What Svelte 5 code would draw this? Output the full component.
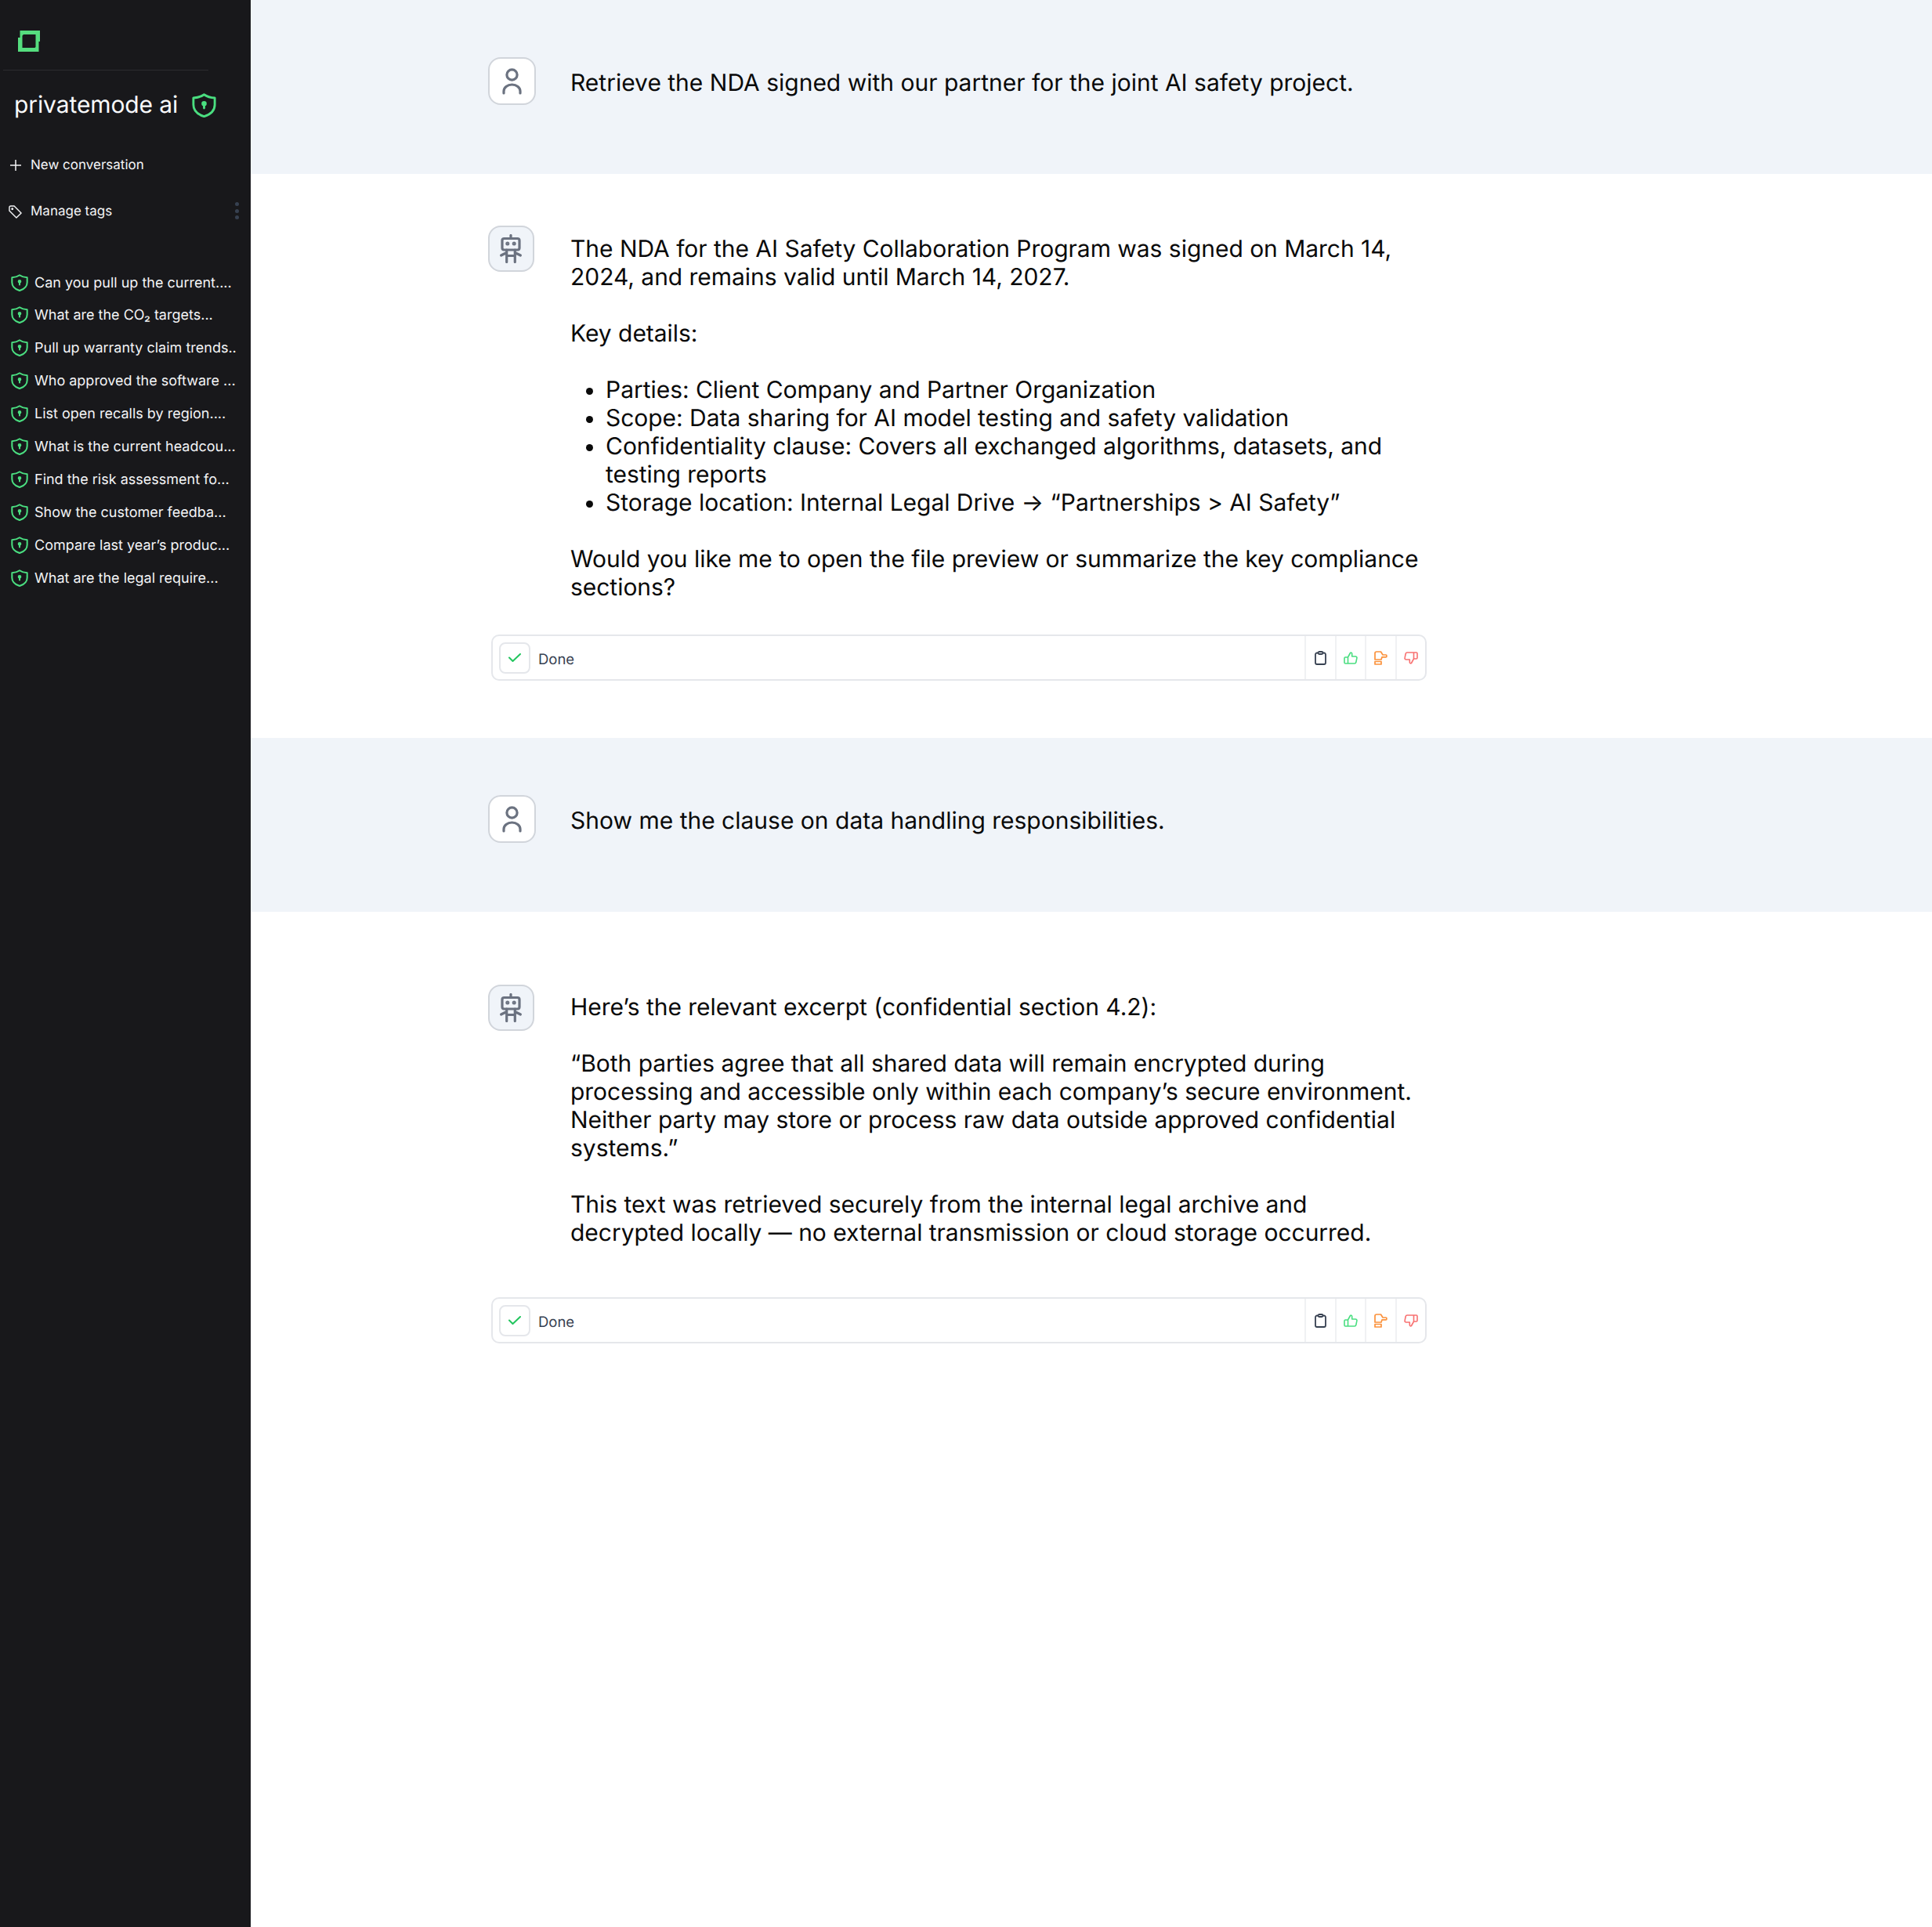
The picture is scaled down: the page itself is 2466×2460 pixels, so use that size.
<script>
  const chats = [
    'Can you pull up the current....',
    'What are the CO₂ targets...',
    'Pull up warranty claim trends..',
    'Who approved the software ...',
    'List open recalls by region....',
    'What is the current headcou...',
    'Find the risk assessment fo...',
    'Show the customer feedba...',
    'Compare last year’s produc...',
    'What are the legal require...'
  ];
</script>

{#snippet shield(size)}
  <svg class="shield" width={size} height={size} viewBox="1.200 1.300 21.600 21.600" fill="none" stroke="#4ade80" stroke-width="2" stroke-linecap="round" stroke-linejoin="round">
    <path d="M12 2.500c2.800 2 5.900 2.800 9.500 3v6c0 5-3.900 8.600-9.500 10.500C6.400 20.100 2.500 16.500 2.500 11.500v-6c3.600-.2 6.700-1 9.500-3z" />
    <circle cx="12" cy="10.500" r="1.300" fill="#4ade80" />
    <path d="M12 11.500v3" />
  </svg>
{/snippet}

{#snippet userAvatar()}
  <div class="avatar user">
    <svg width="25" height="34" viewBox="0 0 25 34" fill="none" stroke="#6b7280" stroke-width="3.200" stroke-linecap="round">
      <circle cx="12.500" cy="8.500" r="6.600" />
      <path d="M2 32v-2.500a10.500 8.500 0 0 1 21 0V32" />
    </svg>
  </div>
{/snippet}

{#snippet botAvatar()}
  <div class="avatar bot">
    <svg width="30" height="37" viewBox="0 0 30 37" fill="none" stroke="#6b7280" stroke-width="3.200" stroke-linecap="round" stroke-linejoin="round">
      <path d="M15 1.500v4" />
      <rect x="4" y="5.500" width="22" height="14.500" rx="2.500" />
      <path d="M9.700 20v15.500M20.300 20v15.500M9.700 27.500h10.600M9.700 23.500l-7 3.500M20.300 23.500l7 3.500" />
      <circle cx="10.800" cy="12" r=".9" fill="#6b7280" />
      <circle cx="19.200" cy="12" r=".9" fill="#6b7280" />
    </svg>
  </div>
{/snippet}

{#snippet statusBar()}
  <div class="status">
    <div class="status-left">
      <span class="check">
        <svg width="16" height="11" viewBox="0 0 16 11" fill="none" stroke="#22c55e" stroke-width="2" stroke-linecap="round" stroke-linejoin="round"><path d="M1 5.500 5.500 10 15 1" /></svg>
      </span>
      <span class="done">Done</span>
    </div>
    <button class="act" aria-label="Copy">
      <svg width="15" height="18" viewBox="0 0 15 18" fill="none" stroke="#374151" stroke-width="1.800" stroke-linejoin="round"><path d="M4.500 2.500H3a2 2 0 0 0-2 2v10.500a2 2 0 0 0 2 2h9a2 2 0 0 0 2-2V4.500a2 2 0 0 0-2-2h-1.500" /><rect x="4.500" y="1" width="6" height="3" rx="1.500" /></svg>
    </button>
    <button class="act" aria-label="Good">
      <svg width="18" height="16" viewBox="0 0 18 16" fill="none" stroke="#4ade80" stroke-width="1.600" stroke-linecap="round" stroke-linejoin="round"><path d="M5.500 7 8.500 1.500c1.200-.8 2.200 0 2.200 1.300V6h4.500c1.200 0 2 1 1.700 2.100l-1.100 5.400c-.2.900-1 1.500-1.900 1.500H5.500V7zM5.500 7H2.200C1.500 7 1 7.500 1 8.200v5.600c0 .700.500 1.200 1.200 1.200h3.300" /></svg>
    </button>
    <button class="act" aria-label="Neutral">
      <svg width="17" height="18" viewBox="0 0 17 18" fill="none" stroke="#fb923c" stroke-width="1.700" stroke-linecap="round" stroke-linejoin="round"><path d="M1 11V3c0-1.100.9-2 2-2h5.500l2.500 4h4c1.300 0 1.300 2.800 0 2.800h-5L9 11H1z" /><path d="M1 13.500h8V17H1z" /></svg>
    </button>
    <button class="act" aria-label="Bad">
      <svg width="18" height="16" viewBox="0 0 18 16" fill="none" stroke="#f87171" stroke-width="1.600" stroke-linecap="round" stroke-linejoin="round"><path d="M12.500 9 9.500 14.500c-1.200.8-2.200 0-2.200-1.300V10H2.800C1.600 10 .8 9 1.100 7.900l1.100-5.400C2.400 1.600 3.200 1 4.100 1h8.400v8zM12.500 9h3.300c.7 0 1.200-.5 1.200-1.200V2.200c0-.7-.5-1.200-1.200-1.200h-3.300" /></svg>
    </button>
  </div>
{/snippet}

<div class="page">
  <aside class="sidebar">
    <div class="logo-row">
      <svg width="28" height="27" viewBox="0 0 28 27"><path fill="#55dd7e" fill-rule="evenodd" d="M2.500 0H28v14h-1.500v13H0V9h2.500V0zM7 5 5.500 6.500v15.500h16l1-1V5H7z" /></svg>
    </div>
    <div class="brand">
      <span>privatemode ai</span>
      {@render shield(31)}
    </div>
    <div class="menu new">
      <svg width="14" height="14" viewBox="0 0 14 14" stroke="#f3f4f6" stroke-width="1.500" fill="none"><path d="M7 0v14M0 7h14" /></svg>
      <span>New conversation</span>
    </div>
    <div class="menu tags">
      <svg width="17" height="17" viewBox="0 0 18 18" fill="none" stroke="#f3f4f6" stroke-width="1.500" stroke-linejoin="round"><path d="M1 3a2 2 0 0 1 2-2h4.500l9.500 9.500L10.500 17 1 7.500V3z" /><circle cx="5" cy="5" r=".8" fill="#f3f4f6" /></svg>
      <span>Manage tags</span>
      <div class="dots"><i></i><i></i><i></i></div>
    </div>
    <ul class="history">
      {#each chats as chat}
        <li>{@render shield(22)}<span>{chat}</span></li>
      {/each}
    </ul>
  </aside>

  <main class="thread">
    <section class="turn mine first">
      <div class="inner">
        {@render userAvatar()}
        <div class="text"><p>Retrieve the NDA signed with our partner for the joint AI safety project.</p></div>
      </div>
    </section>

    <section class="turn reply one">
      <div class="inner">
        {@render botAvatar()}
        <div class="text">
          <p>The NDA for the AI Safety Collaboration Program was signed on March 14, 2024, and remains valid until March 14, 2027.</p>
          <p>Key details:</p>
          <ul>
            <li>Parties: Client Company and Partner Organization</li>
            <li>Scope: Data sharing for AI model testing and safety validation</li>
            <li>Confidentiality clause: Covers all exchanged algorithms, datasets, and testing reports</li>
            <li>Storage location: Internal Legal Drive → “Partnerships &gt; AI Safety”</li>
          </ul>
          <p>Would you like me to open the file preview or summarize the key compliance sections?</p>
        </div>
      </div>
      {@render statusBar()}
    </section>

    <section class="turn mine second">
      <div class="inner">
        {@render userAvatar()}
        <div class="text"><p>Show me the clause on data handling responsibilities.</p></div>
      </div>
    </section>

    <section class="turn reply two">
      <div class="inner">
        {@render botAvatar()}
        <div class="text">
          <p>Here’s the relevant excerpt (confidential section 4.2):</p>
          <p>“Both parties agree that all shared data will remain encrypted during processing and accessible only within each company’s secure environment. Neither party may store or process raw data outside approved confidential systems.”</p>
          <p>This text was retrieved securely from the internal legal archive and decrypted locally — no external transmission or cloud storage occurred.</p>
        </div>
      </div>
      {@render statusBar()}
    </section>
  </main>
</div>

<style>
  :global(body) {
    margin: 0;
    font-family: Inter, "Liberation Sans", sans-serif;
    text-rendering: geometricPrecision;
    background: #fff;
  }

  .page {
    display: flex;
    height: 2460px;
    overflow: hidden;
  }

  .sidebar {
    width: 320px;
    flex: none;
    background: #18181b;
    color: #f3f4f6;
    box-sizing: border-box;
  }

  .logo-row {
    height: 90px;
    margin: 0 54px 0 4px;
    padding: 39px 0 0 19px;
    box-sizing: border-box;
    border-bottom: 1.500px solid #2c2c30;
  }

  .logo-row svg { display: block; }

  .brand {
    display: flex;
    align-items: center;
    gap: 18px;
    padding: 22px 0 0 18px;
    height: 44px;
    font-size: 30px;
    letter-spacing: -0.1px;
    font-weight: 400;
    color: #f9fafb;
  }

  .menu {
    display: flex;
    align-items: center;
    font-size: 17px;
    position: relative;
  }

  .menu span { margin-left: 12px; }

  .new {
    margin-top: 40px;
    padding-left: 13px;
    height: 30px;
  }

  .tags {
    margin-top: 29px;
    padding-left: 11px;
    height: 30px;
  }

  .tags span { margin-left: 11px; }

  .dots {
    position: absolute;
    right: 15px;
    top: 3px;
    display: flex;
    flex-direction: column;
    gap: 3.500px;
  }

  .dots i {
    width: 5px;
    height: 5px;
    border-radius: 50%;
    background: #374151;
  }

  .history {
    list-style: none;
    margin: 0;
    padding: 56px 0 0 14px;
  }

  .history li {
    display: flex;
    align-items: center;
    gap: 8px;
    height: 42px;
    font-size: 18px;
    white-space: nowrap;
  }

  .history li:first-child { height: 40px; }

  .shield { flex: none; }

  .thread {
    flex: 1;
    min-width: 0;
    color: #0a0a0a;
  }

  .turn {
    box-sizing: border-box;
    padding-left: 302.500px;
  }

  .mine { background: #f0f4f9; }
  .first { height: 222px; padding-top: 73px; }
  .one { height: 720px; padding-top: 66px; }
  .second { height: 222px; padding-top: 73px; }
  .two { padding-top: 92.500px; }

  .inner {
    display: grid;
    grid-template-columns: 105.500px 1090px;
    align-items: start;
  }

  .avatar {
    width: 61px;
    height: 61px;
    box-sizing: border-box;
    border: 2.500px solid #d1d5db;
    border-radius: 16px;
    display: flex;
    align-items: center;
    justify-content: center;
  }

  .user { background: #fff; }
  .bot { background: #f0f4f9; width: 59px; height: 59px; }

  .text {
    font-size: 30px;
    line-height: 36px;
    padding-top: 15px;
  }

  .reply .text {
    padding-top: 11.500px;
    letter-spacing: -0.03px;
  }

  .text p { margin: 0 0 36px; }
  .text p:last-child { margin-bottom: 0; }

  .text ul {
    margin: 0 0 36px;
    padding-left: 45px;
  }

  .status {
    display: flex;
    align-items: stretch;
    width: 1194px;
    height: 59px;
    margin: 42.500px 0 0 4.500px;
    box-sizing: border-box;
    border: 2px solid #e5e7eb;
    border-radius: 10px;
  }

  .two .status { margin-top: 64px; }

  .status-left {
    flex: 1;
    display: flex;
    align-items: center;
    padding-left: 7.500px;
    gap: 10.500px;
  }

  .check {
    width: 40px;
    height: 40px;
    box-sizing: border-box;
    border: 2px solid #e5e7eb;
    border-radius: 8px;
    display: flex;
    align-items: center;
    justify-content: center;
  }

  .done {
    font-size: 18.500px;
    color: #374151;
    padding-top: 4px;
  }

  .act {
    width: 38.500px;
    padding: 0;
    background: none;
    border: 0;
    border-left: 2px solid #f0f1f3;
    display: flex;
    align-items: center;
    justify-content: center;
  }
</style>
